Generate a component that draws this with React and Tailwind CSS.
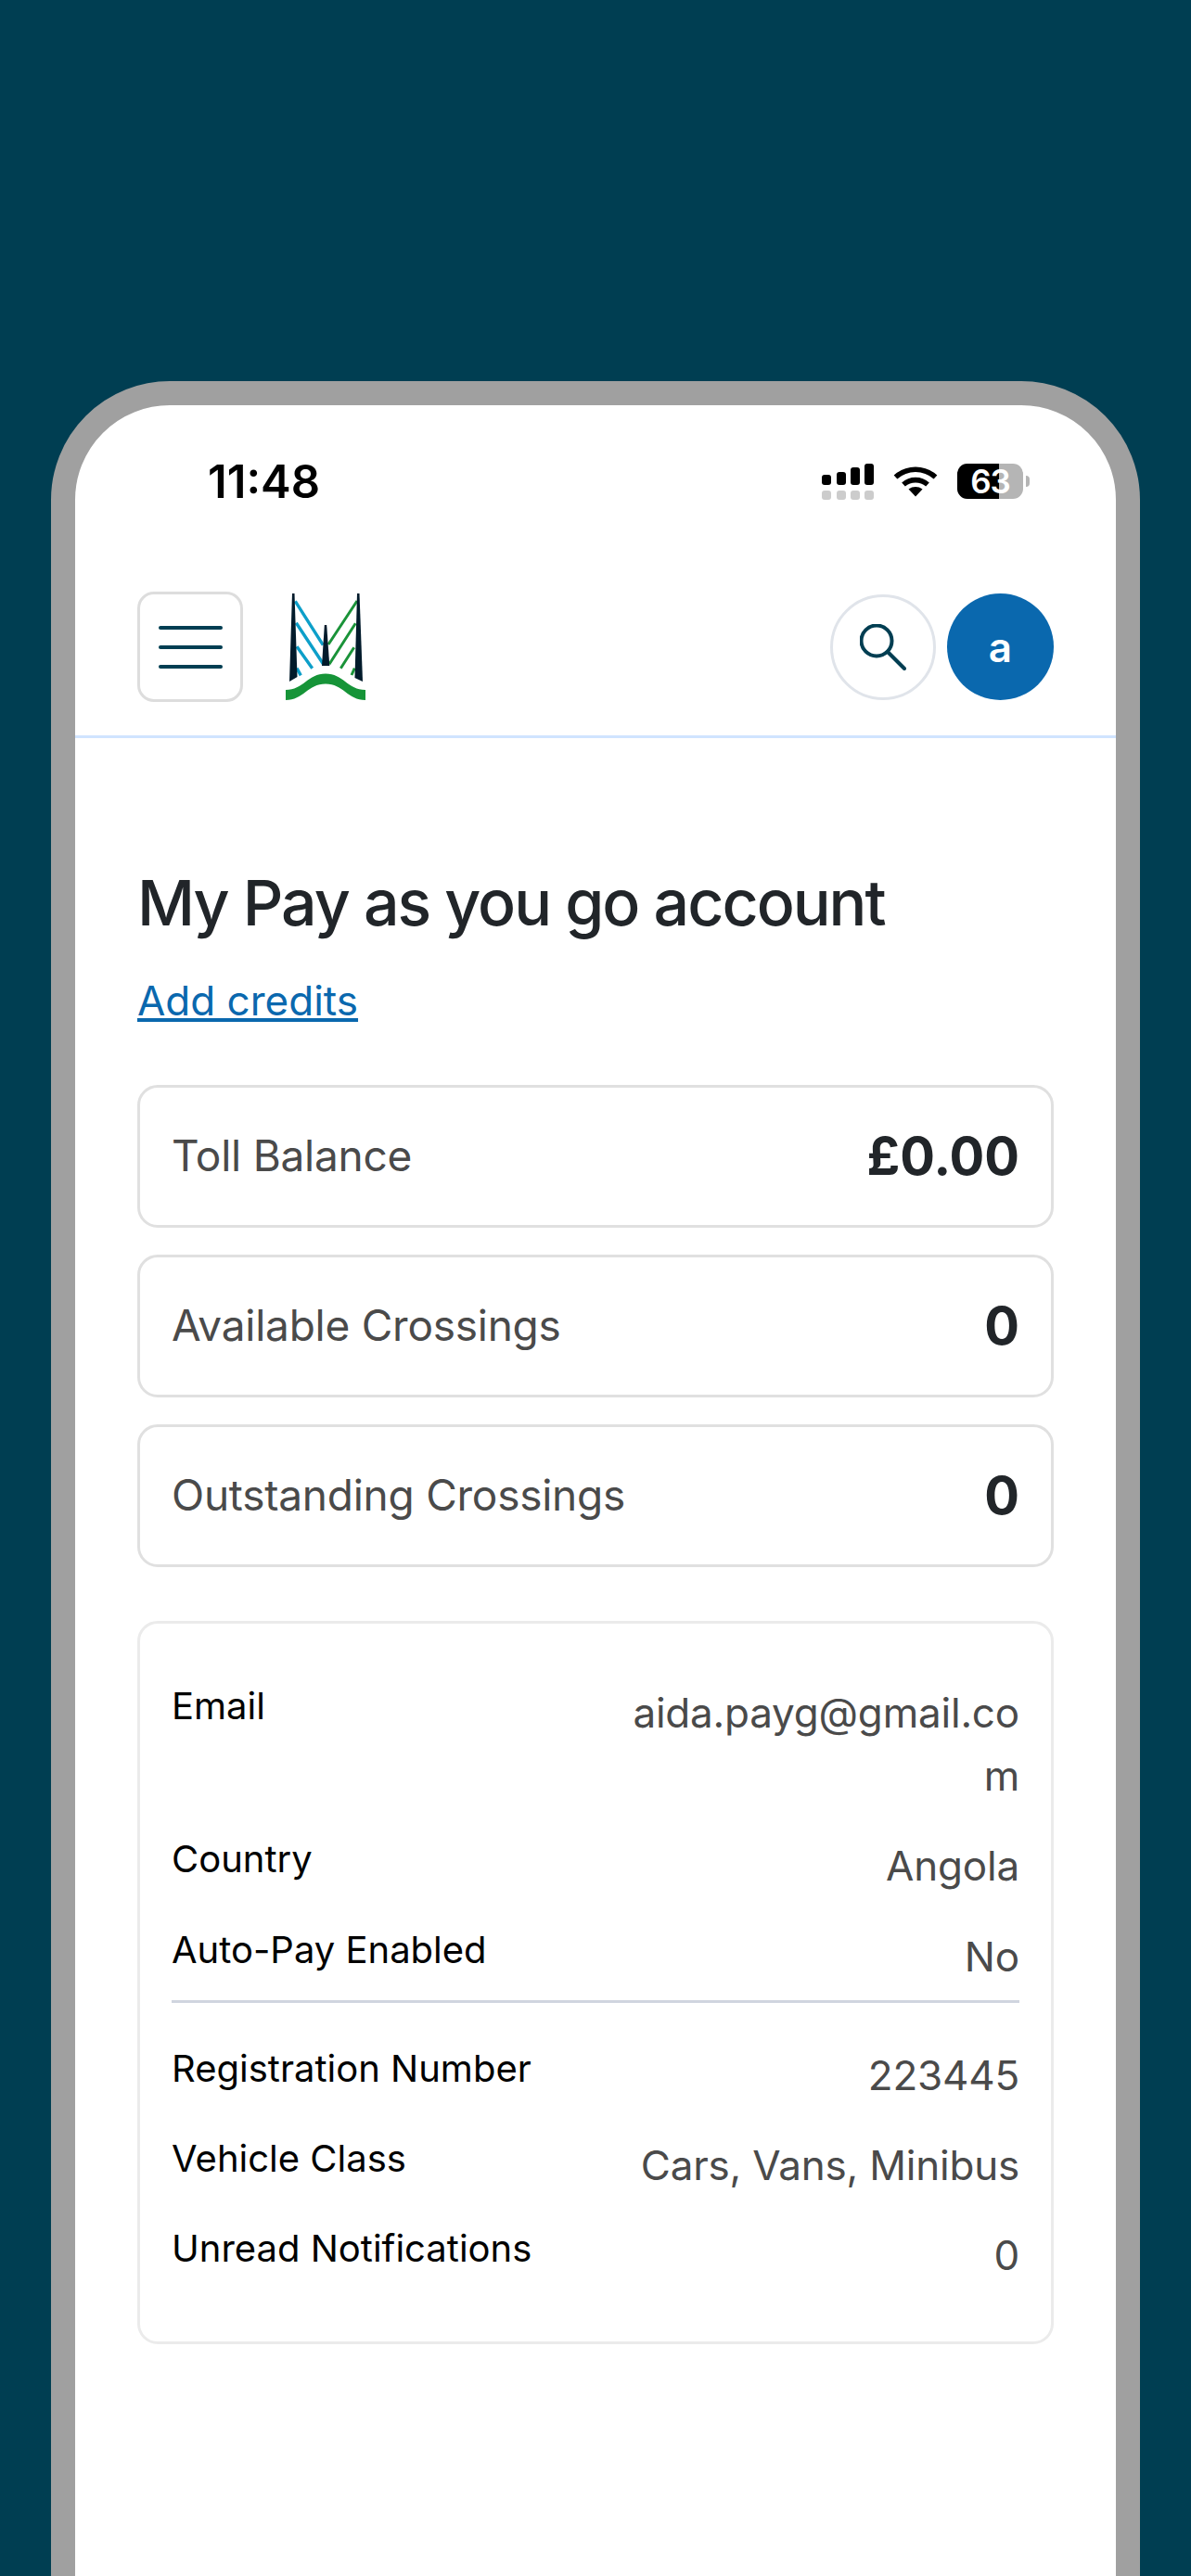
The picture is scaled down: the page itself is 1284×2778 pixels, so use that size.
const font = { fontFamily: "Inter, 'Noto Sans', sans-serif" };

function Logo() {
  return (
    <svg width="86" height="116" viewBox="308 641 86 116" className="shrink-0">
      <g stroke="#0d9fc9" strokeWidth="3.4">
        <path d="M318.3 649.3L348.3 696.7M319.3 672.7L348.3 716.7M320 698.3L336.7 721.7M320 721.7L324.3 729.3" />
      </g>
      <g stroke="#1a9339" strokeWidth="3">
        <path d="M385 649L354 696M383.3 673.3L355 717.3M381.7 699.3L367.3 721.7M382.3 721.7L379 729" />
      </g>
      <path d="M315 641H317.5L320.5 731L312 736Z" fill="#021b2b" />
      <path d="M385 641H387.5L391 736L382.5 732Z" fill="#021b2b" />
      <path d="M349.8 675H352.2L355.3 719H347Z" fill="#021b2b" />
      <path d="M308 745C327 745 332 727.5 351 727.5C370 727.5 375 745 394 745V756C375 756 370 738.5 351 738.5C332 738.5 327 756 308 756Z" fill="#169438" />
    </svg>
  );
}

function Signal() {
  const bars = [
    ["h-[11px]", "mr-[6px]"],
    ["h-[14px]", "mr-[5px]"],
    ["h-[19px]", "mr-[5px]"],
    ["h-[23px]", ""],
  ];
  return (
    <div className="flex flex-col gap-[6px]">
      <div className="flex items-end">
        {bars.map(([h, m], i) => (
          <div key={i} className={`w-[10px] rounded-[3px] bg-black ${h} ${m}`} />
        ))}
      </div>
      <div className="flex">
        {bars.map(([, m], i) => (
          <div key={i} className={`w-[10px] h-[10px] rounded-[3px] bg-[#cccccc] ${m}`} />
        ))}
      </div>
    </div>
  );
}

function Wifi() {
  return (
    <svg width="48" height="34" viewBox="0 0 48 34" className="shrink-0">
      <path d="M2.5 12.5C15 1.5 33 1.5 45.5 12.5" fill="none" stroke="#000" strokeWidth="5.6" />
      <path d="M11 20.5C18.5 14 29.5 14 37 20.5" fill="none" stroke="#000" strokeWidth="5.6" />
      <path d="M16.5 25.5C21 22.2 27 22.2 31.5 25.5L24 33.5Z" fill="#000" />
    </svg>
  );
}

function Battery() {
  return (
    <div className="flex items-center">
      <div className="relative w-[71px] h-[38px] rounded-[11px] bg-[#b5b5b5]">
        <div className="absolute left-0 top-0 bottom-0 w-[45px] rounded-l-[11px] bg-black" />
        <div className="absolute inset-0 flex items-center justify-center text-white font-semibold text-[35px] leading-none tracking-[-1px]">63</div>
      </div>
      <div className="ml-[3px] w-[4px] h-[12px] rounded-r-[4px] bg-[#b5b5b5]" />
    </div>
  );
}

function StatCard({ label, value }) {
  return (
    <div className="flex items-center justify-between h-[154px] px-[34px] border-[3px] border-[#e0e0e0] rounded-[22px]">
      <span className="mb-[2px] text-[46px] leading-none tracking-[-0.25px] text-[#4a4a4a]">{label}</span>
      <span className="text-[56px] leading-none font-bold text-[#212529]">{value}</span>
    </div>
  );
}

function Row({ label, value, className = "" }) {
  return (
    <div className={`flex justify-between ${className}`}>
      <span className="text-[40px] leading-[54px] font-normal text-black whitespace-nowrap">{label}</span>
      <span className="w-[430px] text-right text-[44px] leading-[68px] tracking-[-0.2px] text-[#4a4a4a] break-words">{value}</span>
    </div>
  );
}

export default function App() {
  return (
    <div style={font} className="w-[1284px] h-[2778px] overflow-hidden bg-[#003e52] pt-[411px] px-[55px]">
      <div className="h-[2500px] border-[26px] border-[#a0a0a0] rounded-[128px] bg-white">
        <div className="flex items-center justify-between h-[201px] pl-[143px] pr-[93px] pt-[52px] pb-[89px]">
          <span className="text-[49px] leading-none font-semibold text-black">11:48</span>
          <div className="flex items-center">
            <Signal />
            <div className="ml-[21px]"><Wifi /></div>
            <div className="ml-[21px]"><Battery /></div>
          </div>
        </div>

        <div className="flex items-center justify-between pl-[67px] pr-[67px] pb-[36px] border-b-[3px] border-[#d0e4ff]">
          <div className="flex items-center">
            <button className="w-[114px] h-[119px] border-[3px] border-[#dddddd] rounded-[18px] flex flex-col items-center justify-center gap-[17px]">
              <span className="block w-[69px] h-[4px] rounded-full bg-[#003e52]" />
              <span className="block w-[69px] h-[4px] rounded-full bg-[#003e52]" />
              <span className="block w-[69px] h-[4px] rounded-full bg-[#003e52]" />
            </button>
            <div className="ml-[46px]"><Logo /></div>
          </div>
          <div className="flex items-center gap-[12px]">
            <button className="w-[114px] h-[114px] rounded-full border-[3px] border-[#e0e4ea] flex items-center justify-center">
              <svg width="50" height="50" viewBox="0 0 50 50" fill="none" stroke="#003e52" strokeWidth="4" strokeLinecap="round">
                <circle cx="18" cy="18" r="16.5" />
                <path d="M30 30L48 48" />
              </svg>
            </button>
            <div className="w-[115px] h-[115px] rounded-full bg-[#0a68ae] flex items-center justify-center text-white text-[44px] font-semibold leading-none">a</div>
          </div>
        </div>

        <div className="px-[67px]">
          <h1 className="mt-[137px] text-[68px] leading-[80px] font-medium text-[#212529] tracking-[-2px]">My Pay as you go account</h1>
          <a className="block mt-[40px] text-[44px] leading-[52px] text-[#0a68ae] underline">Add credits</a>

          <div className="mt-[65px] flex flex-col gap-[29px]">
            <StatCard label="Toll Balance" value="£0.00" />
            <StatCard label="Available Crossings" value="0" />
            <StatCard label="Outstanding Crossings" value="0" />
          </div>

          <div className="mt-[58px] h-[780px] border-[3px] border-[#ebebeb] rounded-[22px] px-[34px] pt-[62px]">
            <Row label="Email" value="aida.payg@gmail.com" />
            <Row label="Country" value="Angola" className="mt-[29px]" />
            <Row label="Auto-Pay Enabled" value="No" className="mt-[30px]" />
            <div className="h-[3px] bg-[#d0d5df] mt-[13px]" />
            <Row label="Registration Number" value="223445" className="mt-[44px]" />
            <Row label="Vehicle Class" value="Cars, Vans, Minibus" className="mt-[29px]" />
            <Row label="Unread Notifications" value="0" className="mt-[29px]" />
          </div>
        </div>
      </div>
    </div>
  );
}
